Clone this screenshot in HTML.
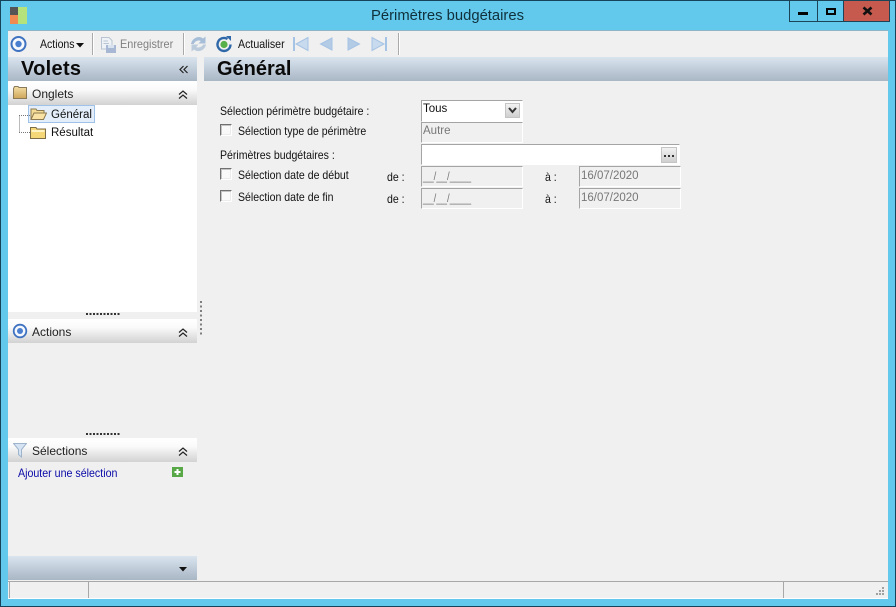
<!DOCTYPE html>
<html><head><meta charset="utf-8"><style>
html,body{margin:0;padding:0;width:896px;height:607px;overflow:hidden;background:#62c9ec}
body{position:relative;font-family:"Liberation Sans",sans-serif;font-size:12px;color:#111}
div,span,svg{position:absolute}
.t{white-space:nowrap;line-height:14px;font-size:11.5px}
.s{font-size:12px;transform:scaleX(.878);transform-origin:0 0}
.hd{background:linear-gradient(#d9e4ef,#a9b6c4)}
.ph{left:8px;width:189px;height:24px;background:linear-gradient(#ffffff 0%,#fafafa 35%,#d2d2d2 100%)}
.f{background:#f0f0f0;box-sizing:border-box;border:1px solid #fff;border-top-color:#a4a4a4;border-left-color:#a4a4a4}
.w{background:#fff}
.cb{width:12px;height:12px;box-sizing:border-box;background:#f9f9f9;border:1px solid #fff;border-top-color:#707070;border-left-color:#707070;box-shadow:inset 1px 1px 0 #c4c4c4,inset -1px -1px 0 #ececec}
.g{color:#777}
.dots{height:2px;width:35px;left:86px;background:repeating-linear-gradient(90deg,#333 0 2px,transparent 2px 3.5px)}
.vb{font-size:20px;line-height:23px;font-weight:bold;color:#0a0a0a}
</style></head><body>
<div style="left:0;top:0;width:896px;height:607px;box-sizing:border-box;border:1px solid #17435a"></div>
<!-- title bar -->
<svg style="left:10px;top:7px" width="17" height="17"><rect width="8" height="8" fill="#555"/><rect x="0" y="8" width="8" height="9" fill="#f08a50"/><rect x="8" y="0" width="9" height="17" fill="#b5e27a"/></svg>
<div class="t" style="left:371px;top:8px;font-size:14.8px;line-height:16px;color:#10303c">Périmètres budgétaires</div>
<div style="left:789px;top:0;width:29px;height:22px;border:1px solid #1d4456;box-sizing:border-box;background:#62c9ec"></div>
<div style="left:817px;top:0;width:27px;height:22px;border:1px solid #1d4456;box-sizing:border-box;background:#62c9ec"></div>
<div style="left:843px;top:0;width:47px;height:22px;border:1px solid #1d4456;box-sizing:border-box;background:#c75a4e"></div>
<div style="left:798px;top:12px;width:10px;height:3px;background:#050505"></div>
<div style="left:826px;top:8px;width:10px;height:7px;box-sizing:border-box;border:2px solid #050505"></div>
<svg style="left:862px;top:6px" width="11" height="10"><path d="M1.5 1.5L9.5 8.5M9.5 1.5L1.5 8.5" stroke="#111" stroke-width="2.6"/></svg>
<!-- client -->
<div style="left:8px;top:31px;width:880px;height:568px;background:#f0f0f0;box-shadow:0 -1px 0 #8fb4c6"></div>
<!-- toolbar -->
<svg style="left:10px;top:35px" width="18" height="18"><circle cx="8.5" cy="9" r="7" fill="#f5f8fc" stroke="#3f72c0" stroke-width="2"/><circle cx="8.5" cy="9" r="3.2" fill="#4a7fd0"/></svg>
<div class="t s" style="left:40px;top:37px;color:#111">Actions</div>
<svg style="left:76px;top:43px" width="8" height="5"><path d="M0 0H8L4 4.5Z" fill="#111"/></svg>
<div style="left:92px;top:33px;width:1px;height:22px;background:#aaa;box-shadow:1px 0 0 #fff"></div>
<svg style="left:100px;top:36px" width="17" height="18"><path d="M1.5 1.5H9L12 4.5V13H1.5Z" fill="#eef2f7" stroke="#b8c4d2"/><rect x="6" y="9" width="10" height="8" fill="#a8b8d4"/><rect x="8" y="9" width="6" height="3" fill="#d9e2ef"/><path d="M3.5 5H8M3.5 7.5H9" stroke="#b8c4d2"/></svg>
<div class="t s" style="left:120px;top:37px;color:#808080;transform:scaleX(.907)">Enregistrer</div>
<div style="left:183px;top:33px;width:1px;height:22px;background:#aaa;box-shadow:1px 0 0 #fff"></div>
<svg style="left:190px;top:35px" width="17" height="18"><path d="M1 9C2 3 9 0 13 3.5L15.5 1.5V8.5H8.5L10.8 6C8.5 4.8 5 6 3.8 9Z" fill="#a6bed8"/><path d="M16 9.5C15 15.5 8 18 4 14.5L1.5 16.5V9.5H8.5L6.2 12C8.5 13.2 12 12 13.2 9.5Z" fill="#bccbdc"/></svg>
<svg style="left:215px;top:35px" width="18" height="18"><path d="M12.5 4A6.5 6.5 0 1 0 15.5 9.5" fill="none" stroke="#2f68a8" stroke-width="2.4"/><circle cx="9" cy="9.5" r="3.6" fill="#58b04a"/><path d="M11 1H16V6Z" fill="#2f68a8"/></svg>
<div class="t s" style="left:238px;top:37px;color:#111;transform:scaleX(.885)">Actualiser</div>
<svg style="left:292px;top:36px" width="100" height="16">
<path d="M2 1V15" stroke="#a5c3e4" stroke-width="2"/><path d="M16 1.5V14.5L4 8Z" fill="#c8daee" stroke="#a5c3e4"/>
<path d="M40 2V14L28.5 8Z" fill="#b4cbe6" stroke="#a5c3e4"/>
<path d="M56 2V14L67.5 8Z" fill="#b4cbe6" stroke="#a5c3e4"/>
<path d="M80 1.5V14.5L92 8Z" fill="#c8daee" stroke="#a5c3e4"/><path d="M94 1V15" stroke="#a5c3e4" stroke-width="2"/>
</svg>
<div style="left:398px;top:33px;width:1px;height:22px;background:#aaa;box-shadow:1px 0 0 #fff"></div>
<!-- headers -->
<div class="hd" style="left:8px;top:57px;width:189px;height:24px"></div>
<div class="t vb" style="left:21px;top:58px;letter-spacing:.3px">Volets</div>
<svg style="left:179px;top:65px" width="10" height="9"><path d="M4.5 1L1 4.5L4.5 8M8.5 1L5 4.5L8.5 8" fill="none" stroke="#222" stroke-width="1.2"/></svg>
<div class="hd" style="left:204px;top:57px;width:684px;height:24px"></div>
<div class="t vb" style="left:217px;top:58px">Général</div>
<!-- Onglets panel -->
<div class="ph" style="top:81px"></div>
<svg style="left:13px;top:86px" width="14" height="13"><defs><linearGradient id="fg" x1="0" y1="0" x2="0" y2="1"><stop offset="0" stop-color="#f3dfa6"/><stop offset="1" stop-color="#cfa558"/></linearGradient></defs><path d="M0.5 2.5V12.5H13.5V1.5H6L5 0.5H1.5Z" fill="url(#fg)" stroke="#8a7a5a"/></svg>
<div class="t" style="left:32px;top:87px;color:#222;font-size:12px">Onglets</div>
<svg style="left:178px;top:90px" width="10" height="9"><path d="M1 4.5L5 1L9 4.5M1 8.5L5 5L9 8.5" fill="none" stroke="#222" stroke-width="1.2"/></svg>
<div class="w" style="left:8px;top:105px;width:189px;height:207px"></div>
<div style="left:28px;top:105px;width:67px;height:18px;box-sizing:border-box;background:#e3eefa;border:1px solid #9fc3e8"></div>
<svg style="left:19px;top:113px" width="12" height="20"><path d="M0.5 2.5V19.5" stroke="#777" stroke-dasharray="1 1" fill="none"/><path d="M0 2.5H11M0 19.5H11" stroke="#777" stroke-dasharray="1 1" fill="none"/></svg>
<svg style="left:30px;top:107px" width="17" height="14"><path d="M1 12.5V2H6L7 3.5H14V6" fill="#f4dc96" stroke="#8d7a50"/><path d="M1 12.5L4 6H16.5L13.5 12.5Z" fill="#f9e2a4" stroke="#8d7a50"/></svg>
<svg style="left:30px;top:126px" width="16" height="13"><path d="M0.5 1.5H6L7 3H15.5V12.5H0.5Z" fill="#f6d778" stroke="#7c6c48"/><rect x="1.5" y="4" width="13" height="2" fill="#fff3c4"/></svg>
<div class="t" style="left:51px;top:108px;color:#111">Général</div>
<div class="t" style="left:51px;top:126px;color:#111">Résultat</div>
<div class="dots" style="top:313px"></div>
<svg style="left:200px;top:301px" width="2" height="35"><path d="M1 0V35" stroke="#333" stroke-dasharray="2 2.5" stroke-width="1.2"/></svg>
<!-- Actions panel -->
<div class="ph" style="top:319px"></div>
<svg style="left:12px;top:323px" width="16" height="16"><circle cx="8" cy="8" r="6.3" fill="#f5f8fc" stroke="#3f72c0" stroke-width="1.8"/><circle cx="8" cy="8" r="3" fill="#4a7fd0"/></svg>
<div class="t" style="left:32px;top:325px;color:#222;font-size:12px">Actions</div>
<svg style="left:178px;top:328px" width="10" height="9"><path d="M1 4.5L5 1L9 4.5M1 8.5L5 5L9 8.5" fill="none" stroke="#222" stroke-width="1.2"/></svg>
<div class="dots" style="top:433px"></div>
<!-- Selections -->
<div class="ph" style="top:438px"></div>
<svg style="left:13px;top:443px" width="14" height="15"><path d="M0.5 0.5H13.5L8.5 6.5V14L5.5 11.5V6.5Z" fill="#d5e3f2" stroke="#9db4cc"/></svg>
<div class="t" style="left:32px;top:444px;color:#222;font-size:12px">Sélections</div>
<svg style="left:178px;top:447px" width="10" height="9"><path d="M1 4.5L5 1L9 4.5M1 8.5L5 5L9 8.5" fill="none" stroke="#222" stroke-width="1.2"/></svg>
<div class="t s" style="left:18px;top:466px;color:#0a0aa8;transform:scaleX(.887)">Ajouter une sélection</div>
<svg style="left:172px;top:467px" width="11" height="10"><rect width="11" height="10" fill="#58a848"/><path d="M5.5 2V8M2.5 5H8.5" stroke="#fff" stroke-width="2"/></svg>
<div class="hd" style="left:8px;top:556px;width:189px;height:24px"></div>
<svg style="left:179px;top:567px" width="8" height="5"><path d="M0 0H8L4 4.5Z" fill="#111"/></svg>
<!-- form labels -->
<div class="t s" style="left:220px;top:104px">Sélection périmètre budgétaire :</div>
<div class="cb" style="left:220px;top:124px"></div>
<div class="t s" style="left:238px;top:124px">Sélection type de périmètre</div>
<div class="t s" style="left:220px;top:148px">Périmètres budgétaires :</div>
<div class="cb" style="left:220px;top:168px"></div>
<div class="t s" style="left:238px;top:168px">Sélection date de début</div>
<div class="cb" style="left:220px;top:190px"></div>
<div class="t s" style="left:238px;top:190px">Sélection date de fin</div>
<div class="t s" style="left:387px;top:170px">de :</div>
<div class="t s" style="left:387px;top:192px">de :</div>
<div class="t s" style="left:545px;top:170px">à :</div>
<div class="t s" style="left:545px;top:192px">à :</div>
<!-- fields -->
<div class="f w" style="left:421px;top:100px;width:102px;height:22px"></div>
<div class="t" style="left:423px;top:102px;color:#111">Tous</div>
<div style="left:505px;top:103px;width:15px;height:15px;box-sizing:border-box;background:linear-gradient(#f2f2f2,#cfcfcf);border:1px solid #c4c4c4"></div>
<svg style="left:508px;top:107px" width="9" height="7"><path d="M1 1L4.5 5L8 1" fill="none" stroke="#333" stroke-width="2"/></svg>
<div class="f" style="left:421px;top:122px;width:102px;height:21px"></div>
<div class="t g" style="left:423px;top:124px">Autre</div>
<div class="f w" style="left:421px;top:144px;width:259px;height:21px"></div>
<div style="left:661px;top:147px;width:16px;height:16px;box-sizing:border-box;background:linear-gradient(#f2f2f2,#cfcfcf);border:1px solid #c4c4c4"></div>
<svg style="left:664px;top:155px" width="10" height="3"><path d="M0 0h2v2h-2zM4 0h2v2h-2zM8 0h2v2h-2z" fill="#333"/></svg>
<div class="f" style="left:421px;top:166px;width:102px;height:21px"></div>
<div class="t g s" style="left:423px;top:169px;transform:scaleX(.8)">__/__/____</div>
<div class="f" style="left:421px;top:188px;width:102px;height:21px"></div>
<div class="t g s" style="left:423px;top:191px;transform:scaleX(.8)">__/__/____</div>
<div class="f" style="left:579px;top:166px;width:102px;height:21px"></div>
<div class="t g" style="left:581px;top:169px">16/07/2020</div>
<div class="f" style="left:579px;top:188px;width:102px;height:21px"></div>
<div class="t g" style="left:581px;top:191px">16/07/2020</div>
<!-- status bar -->
<div style="left:8px;top:581px;width:880px;height:1px;background:#a8a8a8"></div>
<div style="left:8px;top:582px;width:880px;height:17px;background:#f0f0f0"></div>
<div style="left:9px;top:582px;width:1px;height:16px;background:#a8a8a8"></div>
<div style="left:88px;top:582px;width:1px;height:16px;background:#a8a8a8"></div>
<div style="left:783px;top:582px;width:1px;height:16px;background:#a8a8a8"></div>
<div style="left:8px;top:598px;width:880px;height:1px;background:#fff"></div>
<svg style="left:873px;top:586px" width="12" height="12"><path d="M9 1h2v2h-2zM6 4h2v2h-2zM9 4h2v2h-2zM3 7h2v2h-2zM6 7h2v2h-2zM9 7h2v2h-2z" fill="#a0a0a0"/></svg>
</body></html>
